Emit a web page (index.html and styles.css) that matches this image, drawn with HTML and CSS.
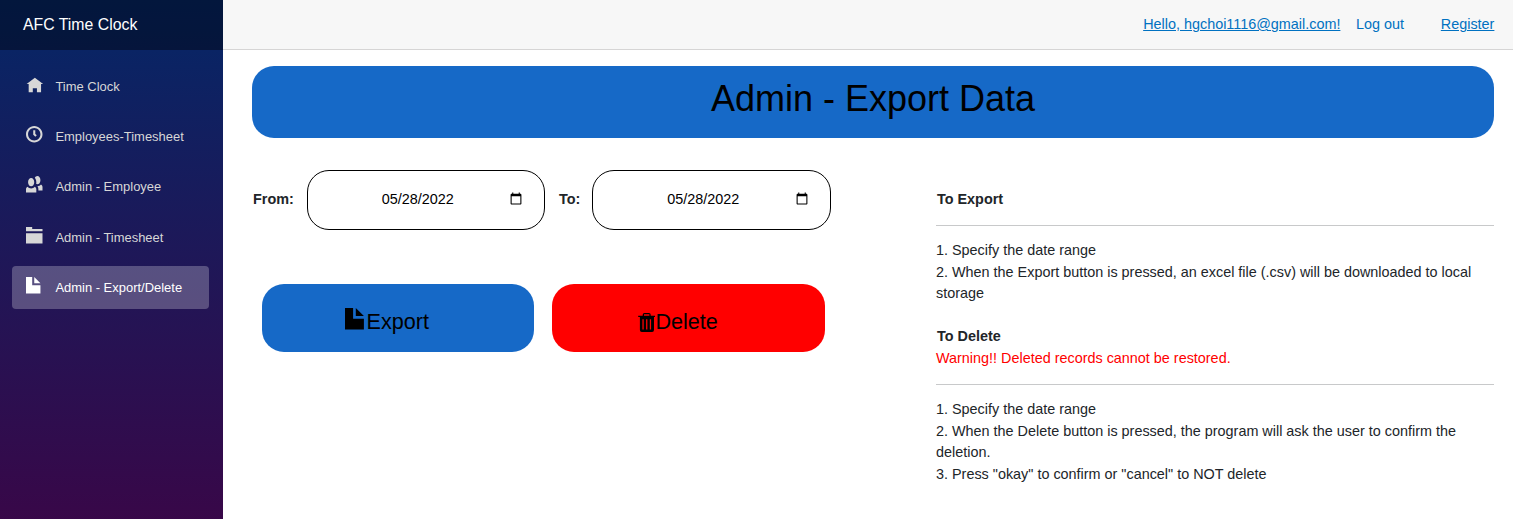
FILE: index.html
```html
<!DOCTYPE html>
<html lang="en-US">
<head>
<meta charset="utf-8">
<title>AFC Time Clock</title>
<link rel="stylesheet" href="styles.css">
</head>
<body>
<div class="page">
  <aside class="sidebar">
    <div class="brand">AFC Time Clock</div>
    <nav class="menu">
      <a class="item"><svg class="icon" viewBox="0 0 8 8"><path transform="translate(.3 .9)" d="M4 0l-4 3h1v4h2v-2h2v2h2v-4.030l1 .03-4-3z"/></svg><span>Time Clock</span></a>
      <a class="item"><svg class="icon" viewBox="0 0 8 8"><path d="M4 0c-2.200 0-4 1.800-4 4s1.800 4 4 4 4-1.800 4-4-1.800-4-4-4zm0 1c1.660 0 3 1.340 3 3s-1.340 3-3 3-3-1.340-3-3 1.340-3 3-3zm-.5 1v2.220l.16.13.5.5.34.38.72-.72-.38-.34-.34-.34v-1.810h-1z"/></svg><span>Employees-Timesheet</span></a>
      <a class="item"><svg class="icon" viewBox="0 0 8 8"><path d="M5.500 0c-.51 0-.95.35-1.220.88.45.54.72 1.275.72 2.125 0 .29-.03.55-.09.81.19.11.38.19.59.19.83 0 1.500-.9 1.500-2s-.67-2-1.500-2zm-3 1c-.828 0-1.500.895-1.500 2s.672 2 1.500 2 1.500-.895 1.500-2-.672-2-1.500-2zm4.750 3.160c-.43.51-1.020.82-1.690.84.27.38.44.84.44 1.340v.66h2v-1.660c0-.52-.31-.97-.75-1.190zm-6.500 1c-.44.22-.75.67-.75 1.190v1.660h5v-1.660c0-.52-.31-.97-.75-1.190-.45.53-1.060.84-1.750.84s-1.300-.32-1.750-.84z"/></svg><span>Admin - Employee</span></a>
      <a class="item"><svg class="icon" viewBox="0 0 8 8"><path d="M0 0v2h8v-1h-5v-1h-3zm0 3v5h8v-5h-8z"/></svg><span>Admin - Timesheet</span></a>
      <a class="item active"><svg class="icon" viewBox="0 0 8 8"><path d="M0 0v8h7v-4h-4v-4h-3zm4 0v3h3l-3-3z"/></svg><span>Admin - Export/Delete</span></a>
    </nav>
  </aside>
  <main class="main">
    <header class="topbar">
      <a class="link">Hello, hgchoi1116@gmail.com!</a>
      <button class="logout">Log out</button>
      <a class="link">Register</a>
    </header>
    <section class="content">
      <h1 class="title">Admin - Export Data</h1>
      <div class="columns">
        <div class="controls">
          <div class="dates">
            <label class="label from" for="from">From:</label>
            <input class="date" id="from" type="date" value="2022-05-28">
            <label class="label to" for="to">To:</label>
            <input class="date" id="to" type="date" value="2022-05-28">
          </div>
          <div class="actions">
            <button class="action export"><svg class="file" viewBox="0 0 8 8"><path d="M0 0v8h7v-4h-4v-4h-3zm4 0v3h3l-3-3z"/></svg><span>Export</span></button>
            <button class="action delete"><svg class="trash" viewBox="0 0 17 19"><path fill-rule="evenodd" d="M4.500 2.800V1.800Q4.500 0 6.300 0h4.400Q12.500 0 12.500 1.800V2.800H17v1.300h-1.200V17q0 2-1.900 2H3.600q-1.900 0-1.900-2V4.100H0V2.800zm1.300 0h5.400V1.200H5.800zM4.200 6.300V16.500h1.300V6.300zm3.700 0V16.500h1.300V6.300zm3.700 0V16.500h1.300V6.300z"/></svg><span>Delete</span></button>
          </div>
        </div>
        <div class="help">
          <strong class="heading">To Export</strong>
          <hr class="rule">
          <p>1. Specify the date range<br>2. When the Export button is pressed, an excel file (.csv) will be downloaded to local storage</p>
          <strong class="heading second">To Delete</strong>
          <p class="warning">Warning!! Deleted records cannot be restored.</p>
          <hr class="rule">
          <p>1. Specify the date range<br>2. When the Delete button is pressed, the program will ask the user to confirm the deletion.<br>3. Press "okay" to confirm or "cancel" to NOT delete</p>
        </div>
      </div>
    </section>
  </main>
</div>
</body>
</html>
```
FILE: styles.css
```css
* { box-sizing: border-box; }
body {
  margin: 0;
  font: 14.4px/21.6px "Liberation Sans", Arial, sans-serif;
  color: #212529;
  background: #fff;
  overflow: hidden;
}
.page { display: flex; height: 519px; }
.sidebar {
  width: 223px;
  flex: none;
  background: linear-gradient(180deg, #052767 0, #3a0647 540px);
}
.brand {
  height: 50px;
  padding: 14px 23px;
  background: rgba(0, 0, 0, .4);
  color: #fff;
  font-size: 15.84px;
}
.menu {
  display: flex;
  flex-direction: column;
  gap: 7.2px;
  padding: 15px 14px 0 12px;
}
.item {
  display: flex;
  height: 43px;
  padding: 0 14.4px;
  border-radius: 4px;
  color: #d7d7d7;
  font-size: 12.96px;
  line-height: 43px;
}
.item.active { background: rgba(255, 255, 255, .25); color: #fff; }
.icon { width: 16.5px; height: 16.5px; margin: 11px 12.5px 0 0; fill: currentColor; overflow: visible; }
.main { flex: 1; min-width: 0; }
.topbar {
  display: flex;
  justify-content: flex-end;
  align-items: center;
  height: 50px;
  padding: 1px 18.6px 0 18px;
  background: #f7f7f7;
  border-bottom: 1px solid #d6d5d5;
}
.link { color: #0071c1; text-decoration: underline; }
.logout {
  margin: 0 36.8px 0 15.6px;
  padding: 0;
  border: 0;
  background: none;
  color: #0071c1;
  font: inherit;
}
.content { padding: 16px 19px 0 29px; }
.title {
  height: 72px;
  margin: 0;
  border-radius: 22px;
  background: #1669c7;
  color: #000;
  font-size: 36px;
  font-weight: 400;
  line-height: 65px;
  text-align: center;
}
.columns { display: flex; justify-content: space-between; padding-top: 32px; }
.dates { display: flex; align-items: center; }
.label { font-weight: 700; }
.from { width: 55px; padding-left: 1px; }
.to { width: 47px; padding-left: 14px; }
.date {
  width: 238px;
  height: 60px;
  padding: 0 19px 1px 21px;
  border: 1px solid #000;
  border-radius: 22px;
  background: #fff;
  color: #000;
  font: 14.4px "Liberation Sans", Arial, sans-serif;
  text-align: center;
}
.to + .date { width: 239px; }
.date::-webkit-datetime-edit-month-field,
.date::-webkit-datetime-edit-day-field,
.date::-webkit-datetime-edit-year-field { padding: 0; }
.actions { display: flex; gap: 18px; padding: 54px 0 0 10px; }
.action {
  display: flex;
  width: 272px;
  height: 68px;
  padding: 24px 0 0 83px;
  border: 0;
  border-radius: 22px;
  background: #1669c7;
  color: #000;
  font: 21.6px/28px "Liberation Sans", Arial, sans-serif;
}
.action.delete { width: 273px; padding-left: 86px; background: #f00; }
.file { width: 21.6px; height: 21.6px; }
.trash { width: 17.4px; height: 19px; margin-top: 5px; }
.help { width: 558px; padding-top: 18.8px; }
.help p { margin: 0; }
.heading { display: block; padding-left: 1px; }
.second { margin-top: 21.6px; }
.rule { margin: 14.4px 0 14.2px; border: 0; border-top: 1px solid #c8c9ca; }
.help .warning { color: #f00; }
```
